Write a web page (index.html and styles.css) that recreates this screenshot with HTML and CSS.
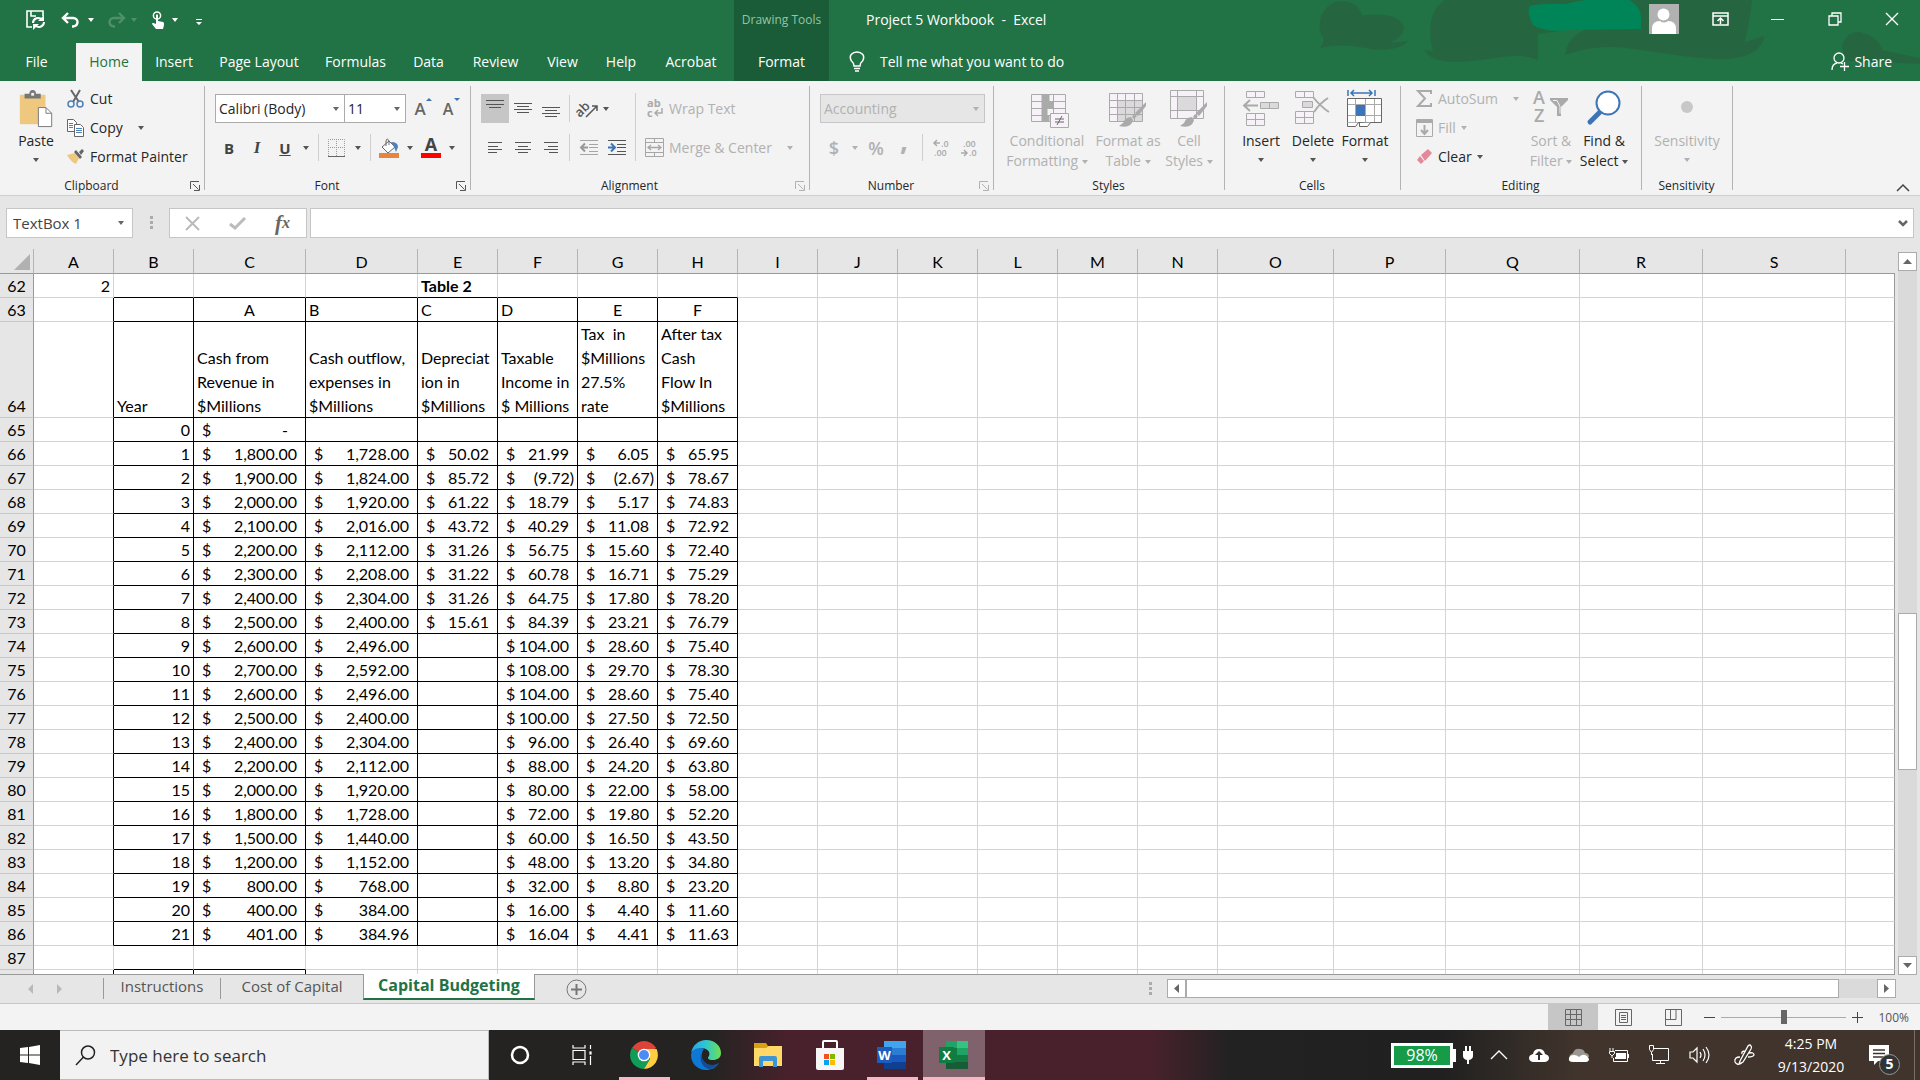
FILE: index.html
```html
<!DOCTYPE html>
<html lang="en">
<head>
    <meta charset="UTF-8">
    <title>Project 5 Workbook - Excel</title>
    <meta name="viewport" content="width=device-width, initial-scale=1.0">
    <link rel="stylesheet" href="styles.css">
</head>
<body>
    <header class="top">
        <svg class="clouds" width="640" height="81" viewBox="0 0 640 81" fill="#256641" aria-hidden="true">
            <path d="M40 48Q46 40 41 34C36 20 45 1 62 1Q78 2 82 15C105 13 122 16 124 28Q124 36 110 43L128 41Q122 50 95 50Q60 42 40 48Z"/>
            <path d="M165 0C148 10 148 35 153 51L145 50Q150 62 175 62C200 62 215 56 240 56Q250 57 258 60L258 34L300 28L300 0Z"/>
            <path d="M285 55Q288 36 305 30L300 0L472 0Q470 20 465 42L484 36Q482 55 450 59C410 60 370 50 335 47Q310 46 285 55Z"/>
            <path d="M562 45Q566 32 580 32Q598 36 602 50L640 58L640 64L600 62Q575 62 565 60Z"/>
            <path fill="#008558" d="M250 6Q262 3 285 4Q310 -2 330 -2L346 -2Q361 6 361 17V29L290 30Q265 33 253 25Q246 12 250 6Z"/>
        </svg>
        <div class="title-row">
            <div class="quick">
                <button class="q-save" aria-label="Save"><svg width="20" height="20" viewBox="0 0 20 20" fill="none" stroke="#fff" stroke-width="1.6"><path d="M6 17H1V1h16v5M5 1v5h5"/><path d="M7 13a5 5 0 0 1 9-3M18 12a5 5 0 0 1-9 3" stroke-width="2"/><path d="M18 5v6h-6zM7 20v-6h6z" fill="#fff" stroke="none"/></svg></button>
                <button class="q-undo" aria-label="Undo"><svg width="19" height="16" viewBox="0 0 19 16" fill="none" stroke="#fff" stroke-width="2.4"><path d="M2 6h10c6 0 6 8 0 8.500h-1M7 1L2 6l5 5"/></svg></button>
                <i class="caret white"></i>
                <button class="q-redo" aria-label="Redo"><svg width="19" height="16" viewBox="0 0 19 16" fill="none" stroke="#4f9069" stroke-width="2.400"><path d="M17 6H7C1 6 1 14 7 14.500h1M12 1l5 5-5 5"/></svg></button>
                <i class="caret faded"></i>
                <button class="q-touch" aria-label="Touch mode"><svg width="15" height="19" viewBox="0 0 15 19"><circle cx="6" cy="4.500" r="3.600" fill="none" stroke="#fff" stroke-width="1.500"/><path fill="#fff" d="M5 4q1-1.500 2 0v6l5 1q1.500.5 1 3l-1 4H5l-4-5q0-1.500 1.500-1L5 13z"/></svg></button>
                <i class="caret white"></i>
                <button class="q-more" aria-label="Customize"><svg width="6" height="6" viewBox="0 0 6 6"><path fill="#fff" d="M0 0h6v1H0zM0 3h6L3 6z"/></svg></button>
            </div>
            <div class="context">Drawing Tools</div>
            <div class="doc-title">Project 5 Workbook&nbsp; -&nbsp; Excel</div>
            <div class="window-buttons">
                <svg class="avatar" width="30" height="30" viewBox="0 0 30 30"><path fill="#b1b1b1" d="M0 0h30v30H0z"/><circle cx="14.500" cy="10.500" r="6" fill="#fff"/><path fill="#fff" d="M3 30V25q0-8 8-8 4 3 8 0 8 0 8 8v5z"/></svg>
                <button aria-label="Ribbon options"><svg width="17" height="14" viewBox="0 0 17 14" fill="none" stroke="#fff" stroke-width="1.500"><path d="M1 1h15v12H1zM1 4h15M8.500 12V6M5.500 9l3-3 3 3"/></svg></button>
                <button aria-label="Minimize"><svg width="13" height="14" viewBox="0 0 13 14"><path stroke="#fff" d="M0 7.500h13"/></svg></button>
                <button aria-label="Restore"><svg width="14" height="14" viewBox="0 0 14 14" fill="none" stroke="#fff" stroke-width="1.300"><path d="M1 4h9v9H1zM4 4V1h9v9h-3"/></svg></button>
                <button aria-label="Close"><svg width="14" height="14" viewBox="0 0 14 14"><path stroke="#fff" stroke-width="1.400" d="M1 1l12 12M13 1L1 13"/></svg></button>
            </div>
        </div>
        <nav class="tabs">
            <div class="tab-list">
                <button class="t-file">File</button>
                <button class="t-home active">Home</button>
                <button class="t-insert">Insert</button>
                <button class="t-page">Page Layout</button>
                <button class="t-formulas">Formulas</button>
                <button class="t-data">Data</button>
                <button class="t-review">Review</button>
                <button class="t-view">View</button>
                <button class="t-help">Help</button>
                <button class="t-acrobat">Acrobat</button>
            </div>
            <button class="context">Format</button>
            <button class="tell"><svg width="16" height="21" viewBox="0 0 16 21" fill="none" stroke="#fff" stroke-width="1.500"><path d="M5 15q0-3-2.500-5C-1 4 4 1 8 1s9 3 5.500 9Q11 12 11 15zM5 17.500h6M6 20h4"/></svg>Tell me what you want to do</button>
            <button class="share"><svg width="19" height="19" viewBox="0 0 19 19" fill="none" stroke="#fff" stroke-width="1.300"><circle cx="8" cy="6" r="5"/><path d="M1 18q0-6 5-7M10 11l2 1M13.500 10v9M9 14.500h9"/></svg>Share</button>
        </nav>
    </header>

    <section class="ribbon">
        <div class="group clipboard">
            <div class="tools">
                <button class="big paste">
                    <svg width="36" height="40" viewBox="0 0 36 40"><path fill="#edc87e" d="M1 5h27v31H1z"/><path fill="#777" d="M6 4h5q0-4 3.500-4T18 4h5v5H6z"/><path fill="#f3f3f3" d="M13 3h3v3h-3z"/><path fill="#fff" stroke="#777" d="M20.500 18.500h8l6 6v14h-14z"/><path fill="none" stroke="#777" d="M28.500 18.500v6h6"/></svg>
                    <span>Paste</span><i class="caret"></i>
                </button>
                <div class="stack">
                    <button><svg width="18" height="18" viewBox="0 0 18 18" fill="none"><path stroke="#666" stroke-width="2" d="M4 0l8 12M13 0L6 12"/><circle cx="4" cy="14" r="3" stroke="#4f80b8" stroke-width="1.500"/><circle cx="13" cy="14" r="3" stroke="#4f80b8" stroke-width="1.500"/></svg>Cut</button>
                    <button><svg width="18" height="18" viewBox="0 0 18 18" fill="#fff" stroke="#666"><path d="M.5.5h6l3 3v9h-9z"/><path d="M7.500 5.500h6l3 3v9h-9z"/><path stroke="#4f80b8" d="M2 4.500h4M2 6.500h4M2 8.500h4M9 9.500h6M9 11.500h6M9 13.500h6"/></svg>Copy<i class="caret far"></i></button>
                    <button><svg width="18" height="16" viewBox="0 0 18 16"><path fill="#edc87e" d="M0 6l8-2 4 5-3 6q-5-2-9-9z"/><path fill="#666" d="M7 3l2-2 6 7-2 2zM12 3l3-3 2 2-3 4z"/></svg>Format Painter</button>
                </div>
            </div>
            <div class="caption">Clipboard<svg class="launch"><use href="#launch"/></svg></div>
        </div>

        <div class="group font">
            <div class="tools rows">
                <div class="row">
                    <span class="drop font-name"><select aria-label="Font"><option>Calibri (Body)</option></select></span>
                    <span class="drop font-size"><select aria-label="Font size"><option>11</option></select></span>
                    <button class="w28 grow" aria-label="Increase font size"><b>A</b><i class="up"></i></button>
                    <button class="w28 shrink" aria-label="Decrease font size"><b>A</b><i class="down"></i></button>
                </div>
                <div class="row">
                    <button class="w28 bold">B</button>
                    <button class="w28 italic">I</button>
                    <button class="w28 under">U</button>
                    <i class="caret"></i>
                    <i class="sep"></i>
                    <button class="w28 edges" aria-label="Borders"><svg width="18" height="18" viewBox="0 0 18 18"><path fill="none" stroke="#a594a8" stroke-dasharray="1 1" d="M.5 17V.5h16V17M8.500 0v17M0 8.500h17"/><path stroke="#666" d="M0 17.500h17"/></svg></button>
                    <i class="caret"></i>
                    <i class="sep"></i>
                    <button class="w28 fill" aria-label="Fill color"><svg width="20" height="20" viewBox="0 0 20 20"><path fill="#fff" stroke="#666" d="M3 9l7-6 6 6-7 6z"/><path fill="none" stroke="#666" d="M7 8V3q1-4 3 0v4"/><path fill="#4f80b8" d="M12 4q7 0 7 5l-2 5-2-5z"/><path fill="#e8853d" d="M0 15h20v5H0z"/></svg></button>
                    <i class="caret"></i>
                    <button class="w28 color" aria-label="Font color">A</button>
                    <i class="caret"></i>
                </div>
            </div>
            <div class="caption">Font<svg class="launch"><use href="#launch"/></svg></div>
        </div>

        <div class="group align">
            <div class="tools">
                <div class="rows">
                    <div class="row">
                        <button class="w28 pressed" aria-label="Top align"><svg width="18" height="18"><path stroke="#555" d="M0 4.500h18M3 7.500h12M0 .5h18"/></svg></button>
                        <button class="w28" aria-label="Middle align"><svg width="18" height="18"><path stroke="#555" d="M0 3.500h18M3 6.500h12M0 9.500h18M3 12.500h12"/></svg></button>
                        <button class="w28" aria-label="Bottom align"><svg width="18" height="18"><path stroke="#555" d="M0 7.500h18M3 10.500h12M0 13.500h18M3 16.500h12"/></svg></button>
                        <i class="sep"></i>
                        <button class="w28 angle" aria-label="Orientation"><svg width="20" height="19" viewBox="0 0 20 19"><text x="-5" y="13" transform="rotate(-45 5 9)">ab</text><path fill="none" stroke="#555" stroke-width="1.500" d="M7 18L18 7M13 7h5v5"/></svg></button>
                        <i class="caret"></i>
                    </div>
                    <div class="row">
                        <button class="w28" aria-label="Align left"><svg width="14" height="12"><path stroke="#555" d="M0 .5h14M0 4.500h10M0 7.500h14M0 10.500h9"/></svg></button>
                        <button class="w28" aria-label="Center"><svg width="16" height="12"><path stroke="#555" d="M0 .5h16M3 4.500h10M0 7.500h16M3 10.500h10"/></svg></button>
                        <button class="w28" aria-label="Align right"><svg width="14" height="12"><path stroke="#555" d="M0 .5h14M4 4.500h10M0 7.500h14M5 10.500h9"/></svg></button>
                        <i class="sep"></i>
                        <button class="w28" aria-label="Decrease indent"><svg width="18" height="17"><path stroke="#a6a6a6" d="M0 1.500h18M9 5.500h9M9 8.500h9M9 12.500h9M0 15.500h18"/><path fill="none" stroke="#999" stroke-width="2" d="M8 8.500H1M5 4.500l-4 4 4 4"/></svg></button>
                        <button class="w28" aria-label="Increase indent"><svg width="18" height="17"><path stroke="#555" d="M0 1.500h18M9 5.500h9M9 8.500h9M9 12.500h9M0 15.500h18"/><path fill="none" stroke="#3d74b5" stroke-width="2" d="M0 8.500h7M3 4.500l4 4-4 4"/></svg></button>
                    </div>
                </div>
                <i class="sep tall"></i>
                <div class="rows">
                    <div class="row"><button class="wide" disabled><svg class="wrap-icon" width="19" height="19" viewBox="0 0 19 19"><text x="2" y="8">ab</text><text x="2" y="18">c</text><path fill="none" stroke="#aaa" stroke-width="1.500" d="M17 9v5h-7M13 11l-3 3 3 3"/></svg>Wrap Text</button></div>
                    <div class="row"><button class="wide" disabled><svg width="19" height="19" viewBox="0 0 19 19" fill="none" stroke="#a6a6a6"><path d="M.5.5h18v18H.5zM.5 4.500h18M.5 14.500h18M9.500.5v4M9.500 14.500v4"/><path stroke-width="1.300" d="M3 9.500h13M6 7L3 9.500 6 12M13 7l3 2.500-3 2.500"/></svg>Merge &amp; Center<i class="caret faint far"></i></button></div>
                </div>
            </div>
            <div class="caption">Alignment<svg class="launch off"><use href="#launch"/></svg></div>
        </div>

        <div class="group number">
            <div class="tools rows">
                <div class="row"><span class="drop format off"><select aria-label="Number format" disabled><option>Accounting</option></select></span></div>
                <div class="row">
                    <button class="w28 sign" disabled>$</button>
                    <i class="caret faint"></i>
                    <button class="w28 sign" disabled>%</button>
                    <button class="w28 comma" disabled>,</button>
                    <i class="sep"></i>
                    <button class="w28 dec" disabled aria-label="Increase decimal"><svg width="16" height="18" viewBox="0 0 16 18"><text x="8" y="8">.0</text><text x="1" y="17">.00</text><path fill="none" stroke="#aaa" stroke-width="1.500" d="M7 4H1M4 1L1 4l3 3"/></svg></button>
                    <button class="w28 dec" disabled aria-label="Decrease decimal"><svg width="16" height="18" viewBox="0 0 16 18"><text x="2" y="8">.00</text><text x="8" y="17">.0</text><path fill="none" stroke="#aaa" stroke-width="1.500" d="M0 14h6M3 11l3 3-3 3"/></svg></button>
                </div>
            </div>
            <div class="caption">Number<svg class="launch off"><use href="#launch"/></svg></div>
        </div>

        <div class="group styles">
            <div class="tools">
                <button class="big cond" disabled>
                    <svg width="38" height="38" viewBox="0 0 38 38" fill="#f6f2f7" stroke="#aaa"><path d="M.5 4.500h34v27H.5zM.5 11.500h34M.5 18.500h34M.5 25.500h34M11.500 4.500v27M22.500 4.500v27"/><path fill="#aaa" d="M11 5h7v6h-7zM11 12h11v6H11zM11 19h5v6h-5zM11 26h7v5h-7z"/><path d="M19.500 23.500h18v14h-18z"/><path stroke="#666" d="M24 29h9M24 32h9M31 26l-5 9"/></svg>
                    <span>Conditional</span><span>Formatting <i class="caret faint"></i></span>
                </button>
                <button class="big fmt-table" disabled>
                    <svg width="38" height="38" viewBox="0 0 38 38" fill="#f6f2f7" stroke="#aaa"><path d="M.5 3.500h33v28H.5z"/><path fill="#dcd9dc" stroke="none" d="M9 11h24v20H9z"/><path fill="none" d="M.5 10.500h33M.5 17.500h33M.5 24.500h33M8.500 3.500v28M16.500 3.500v28M25.500 3.500v28"/><use href="#brush"/></svg>
                    <span>Format as</span><span>Table <i class="caret faint"></i></span>
                </button>
                <button class="big cell-styles" disabled>
                    <svg width="38" height="38" viewBox="0 0 38 38" fill="#f6f2f7" stroke="#aaa"><path d="M.5.5h33v28H.5z"/><path fill="#dcd9dc" d="M7.500 6.500h19v14h-19z"/><path fill="none" d="M.5 6.500h33M.5 20.500h33M7.500.5v28M26.500.5v28"/><use href="#brush"/></svg>
                    <span>Cell</span><span>Styles <i class="caret faint"></i></span>
                </button>
            </div>
            <div class="caption">Styles</div>
        </div>

        <div class="group cells">
            <div class="tools">
                <button class="big">
                    <svg width="36" height="38" viewBox="0 0 36 38" fill="#f6f2f7" stroke="#aaa"><path d="M3.500 1.500h18v6h-18zM12.500 1.500v6M3.500 23.500h18v12h-18zM3.500 29.500h18M12.500 23.500v12"/><path fill="#dcd9dc" d="M17.500 12.500h18v6h-18zM26.500 12.500v6"/><path fill="none" stroke-width="2" d="M15 15.500H2M7 10l-6 5.500L7 21"/></svg>
                    <span>Insert</span><i class="caret"></i>
                </button>
                <button class="big">
                    <svg width="36" height="38" viewBox="0 0 36 38" fill="#f6f2f7" stroke="#aaa"><path d="M.5 1.500h18v6H.5zM9.500 1.500v6M.5 21.500h18v12H.5zM.5 27.500h18M9.500 21.500v12"/><path fill="#dcd9dc" d="M7.500 11.500h10v6h-10z"/><path fill="none" stroke-width="2" d="M18 7q8 10 16 15M33 8q-8 5-14 14"/></svg>
                    <span>Delete</span><i class="caret"></i>
                </button>
                <button class="big">
                    <svg width="36" height="38" viewBox="0 0 36 38" fill="#fff" stroke="#666"><path fill="none" stroke="#3d74b5" stroke-width="1.500" d="M1 0v6M28 0v6M4 3h21M7 0L4 3l3 3M22 0l3 3-3 3"/><path d="M.5 8.500h34v24H.5z"/><path fill="none" stroke="#aaa" d="M1 14.500h33M1 25.500h33M8.500 9v23M18.500 9v23M27.500 9v23"/><path fill="#3d74b5" stroke="none" d="M9 15h9v11H9z"/><path d="M.5 32.500v4h8l3-4M12.500 33v3.500h8l3-4"/></svg>
                    <span>Format</span><i class="caret"></i>
                </button>
            </div>
            <div class="caption">Cells</div>
        </div>

        <div class="group editing">
            <div class="tools">
                <div class="stack">
                    <button disabled><svg width="17" height="18" viewBox="0 0 17 18"><path fill="none" stroke="#aaa" stroke-width="2" d="M15 4V1H2l7 7.500L2 16h13v-3"/></svg>AutoSum<i class="caret faint far"></i></button>
                    <button disabled><svg width="17" height="18" viewBox="0 0 17 18"><path fill="none" stroke="#aaa" d="M.5.5h16v17H.5z"/><path fill="#aaa" d="M1 1h15v3H1z"/><path fill="none" stroke="#aaa" stroke-width="2" d="M8.500 6v9M5 11l3.500 4 3.500-4"/></svg>Fill<i class="caret faint"></i></button>
                    <button><svg width="17" height="18" viewBox="0 0 17 18"><path fill="#e4899b" d="M5 7l7-6 4 4-7 8zM4 8l4 5-3 3-4-4z"/></svg>Clear<i class="caret"></i></button>
                </div>
                <button class="big sort" disabled>
                    <svg width="36" height="38" viewBox="0 0 36 38"><text x="0" y="14">A</text><text x="1" y="32">Z</text><path fill="#aaa" d="M17 8h18v2l-7 7v9h-4v-9l-7-7z"/><path stroke="#f3f3f3" d="M20 10.500h4l3 6v7"  fill="none"/></svg>
                    <span>Sort &amp;</span><span>Filter <i class="caret faint"></i></span>
                </button>
                <button class="big find">
                    <svg width="36" height="38" viewBox="0 0 36 38"><path stroke="#3d74b5" stroke-width="5" stroke-linecap="round" d="M4 32l10-10"/><circle cx="22" cy="13" r="11.500" fill="#fff" stroke="#3d74b5" stroke-width="2"/></svg>
                    <span>Find &amp;</span><span>Select <i class="caret"></i></span>
                </button>
            </div>
            <div class="caption">Editing</div>
        </div>

        <div class="group sens">
            <div class="tools">
                <button class="big" disabled>
                    <svg width="36" height="38" viewBox="0 0 36 38"><circle cx="18" cy="17" r="6" fill="#c8c8c8"/></svg>
                    <span>Sensitivity</span><i class="caret faint"></i>
                </button>
            </div>
            <div class="caption">Sensitivity</div>
        </div>
        <button class="collapse" aria-label="Collapse ribbon"><svg width="14" height="8" viewBox="0 0 14 8"><path fill="none" stroke="#444" stroke-width="1.500" d="M1 7l6-6 6 6"/></svg></button>
    </section>

    <section class="formula-bar">
        <span class="drop name-box"><select aria-label="Name box"><option>TextBox 1</option></select></span>
        <i class="dots"></i>
        <div class="fx">
            <button aria-label="Cancel"><svg width="15" height="13" viewBox="0 0 15 13"><path stroke="#bbb" stroke-width="2" d="M1 0l13 13M14 0L1 13"/></svg></button>
            <button aria-label="Enter"><svg width="17" height="13" viewBox="0 0 17 13"><path fill="none" stroke="#bbb" stroke-width="3" d="M1 7l5 4L16 1"/></svg></button>
            <button class="fx-button" aria-label="Insert function"><i>f</i>x</button>
        </div>
        <div class="formula"><input type="text" aria-label="Formula"><svg width="10" height="7" viewBox="0 0 10 7"><path fill="none" stroke="#666" stroke-width="2.500" d="M1 1l4 4 4-4"/></svg></div>
    </section>

    <main class="workspace">
        <div class="sheet">
            <table>
                <colgroup id="cols"></colgroup>
                <thead><tr id="letters"><th class="corner"><svg width="16" height="16" viewBox="0 0 16 16"><path fill="#b1b1b1" d="M16 0v16H0z"/></svg></th></tr></thead>
                <tbody id="cells"></tbody>
            </table>
        </div>
        <div class="vscroll">
            <button aria-label="Scroll up"><svg width="9" height="5"><path fill="#666" d="M0 5h9L4.500 0z"/></svg></button>
            <div class="track"><div class="thumb"></div></div>
            <button aria-label="Scroll down"><svg width="9" height="5"><path fill="#666" d="M0 0h9L4.500 5z"/></svg></button>
        </div>
    </main>

    <section class="sheet-bar">
        <div class="sheet-nav">
            <svg width="5" height="10"><path fill="#b9b9b9" d="M5 0v10L0 5z"/></svg>
            <svg width="5" height="10"><path fill="#b9b9b9" d="M0 0v10l5-5z"/></svg>
        </div>
        <button class="sheet-tab s-instructions">Instructions</button>
        <button class="sheet-tab s-cost">Cost of Capital</button>
        <button class="sheet-tab s-budget active">Capital Budgeting</button>
        <button class="add-sheet" aria-label="New sheet"><svg width="21" height="21" viewBox="0 0 21 21" fill="none" stroke="#777"><circle cx="10.500" cy="10.500" r="9.500"/><path stroke-width="2" d="M5 10.500h11M10.500 5v11"/></svg></button>
        <i class="dots"></i>
        <div class="hscroll">
            <button aria-label="Scroll left"><svg width="5" height="9"><path fill="#666" d="M5 0v9L0 4.500z"/></svg></button>
            <div class="track"><div class="thumb"></div></div>
            <button aria-label="Scroll right"><svg width="5" height="9"><path fill="#666" d="M0 0v9l5-4.500z"/></svg></button>
        </div>
    </section>

    <footer class="status">
        <button class="view on" aria-label="Normal"><svg width="17" height="17" viewBox="0 0 17 17" fill="none" stroke="#666"><path d="M.5.5h16v16H.5zM.5 5.500h16M.5 10.500h16M5.500.5v16M11.500.5v16"/></svg></button>
        <button class="view" aria-label="Page layout"><svg width="17" height="17" viewBox="0 0 17 17" fill="none" stroke="#666"><path d="M.5.5h16v16H.5zM4.500 3.500h8v10h-8zM6 6.500h5M6 8.500h5M6 10.500h5"/></svg></button>
        <button class="view" aria-label="Page break preview"><svg width="17" height="17" viewBox="0 0 17 17" fill="none" stroke="#666"><path d="M.5.5h16v16H.5zM5.500.5v10M.5 10.500h10.500V.5"/></svg></button>
        <button class="zoom" aria-label="Zoom out"><svg width="11" height="11"><path stroke="#444" d="M0 5.500h11"/></svg></button>
        <input class="zoom-range" type="range" min="0" max="100" value="50" aria-label="Zoom">
        <button class="zoom" aria-label="Zoom in"><svg width="11" height="11"><path stroke="#444" d="M0 5.500h11M5.500 0v11"/></svg></button>
        <span class="percent">100%</span>
    </footer>

    <div class="taskbar">
        <button class="start" aria-label="Start"><svg width="20" height="20" viewBox="0 0 20 20"><path fill="#fff" d="M0 3l8-1v7.500H0zM9 2l11-2v9.500H9zM0 10.500h8V18l-8-1zM9 10.500h11V20L9 18z"/></svg></button>
        <label class="search"><svg width="21" height="21" viewBox="0 0 21 21" fill="none" stroke="#222" stroke-width="1.500"><circle cx="13" cy="7.500" r="6.500"/><path d="M8.500 12L1 20"/></svg><input type="text" placeholder="Type here to search"></label>
        <button class="app" aria-label="Cortana"><svg width="20" height="20"><circle cx="10" cy="10" r="8" fill="none" stroke="#fff" stroke-width="2.500"/></svg></button>
        <button class="app" aria-label="Task view"><svg width="20" height="20" viewBox="0 0 20 20" fill="none" stroke="#fff" stroke-width="1.200"><path d="M1 0v3h12V0M1 20v-3h12v3M1 5.500h12v9H1zM18.500 0v4M18.500 11v9"/><path fill="#fff" d="M18 7h1v2h-1z"/></svg></button>
        <button class="app open" aria-label="Chrome"><svg width="28" height="28" viewBox="0 0 28 28"><path fill="#db4437" d="M14 14L2 7a14 14 0 0 1 24.200 0z"/><path fill="#0f9d58" d="M14 14L1.900 7A14 14 0 0 0 14 28l6-10z"/><path fill="#ffcd40" d="M14 8h12.600A14 14 0 0 1 14 28l6-10z"/><circle cx="14" cy="14" r="6.300" fill="#fff"/><circle cx="14" cy="14" r="5" fill="#4c8bf5"/></svg></button>
        <button class="app" aria-label="Edge"><svg width="30" height="30" viewBox="0 0 30 30"><defs><linearGradient id="edge"><stop offset="0" stop-color="#2aa5e8"/><stop offset=".5" stop-color="#30c7cf"/><stop offset="1" stop-color="#6fe04e"/></linearGradient></defs><path fill="#0f78d4" d="M0 15C1 8 8 6 13 9c-4 4-3 14 4 16 4 1 8 0 11-2-3 5-8 7-13 7C6 30 0 23 0 15z"/><path fill="#124d96" d="M10 14c-2 8 3 15 9 15 4-1 7-3 9-6-8 5-17 0-18-9z"/><path fill="url(#edge)" d="M0 14C1 5 8 0 15 0c9 0 15 6 15 13 0 5-4 7-8 7-5 0-6-2-4-4 2-5-3-8-8-8C5 8 1 10 0 14z"/></svg></button>
        <button class="app" aria-label="File Explorer"><svg width="28" height="24" viewBox="0 0 28 24"><path fill="#d9a016" d="M0 0h12l2 3h14v6H0z"/><path fill="#ffd868" d="M0 5h12l3-2h13v20H0z"/><path fill="#3d96d3" d="M5 24v-9q0-2 2-2h14q2 0 2 2v9h-4v-6H9v6z"/></svg></button>
        <button class="app" aria-label="Microsoft Store"><svg width="30" height="30" viewBox="0 0 30 30"><path fill="none" stroke="#fff" stroke-width="2" d="M8 9V2q0-1 1-1h12q1 0 1 1v7"/><path fill="#f6f6f6" d="M1 8h28v20q0 2-2 2H3q-2 0-2-2z"/><path fill="#f25022" d="M9 14h5v5H9z"/><path fill="#7fba00" d="M15 14h5v5h-5z"/><path fill="#00a4ef" d="M9 20h5v5H9z"/><path fill="#ffb900" d="M15 20h5v5h-5z"/></svg></button>
        <button class="app open" aria-label="Word"><svg width="30" height="28" viewBox="0 0 30 28"><path fill="#41a5ee" d="M7 0h22v7H7z"/><path fill="#2b7cd3" d="M7 7h22v7H7z"/><path fill="#185abd" d="M7 14h22v7H7z"/><path fill="#103f91" d="M7 21h22v7H7z"/><path fill="#1b5cbe" d="M0 6h15v16H0z"/><text x="7.500" y="19">W</text></svg></button>
        <button class="app open current" aria-label="Excel"><svg width="30" height="28" viewBox="0 0 30 28"><path fill="#21a366" d="M7 0h22v7H7z"/><path fill="#33c481" d="M18 0h11v7H18z"/><path fill="#107c41" d="M7 7h22v14H7z"/><path fill="#21a366" d="M18 7h11v7H18z"/><path fill="#185c37" d="M7 21h22v7H7z"/><path fill="#107c41" d="M0 6h15v16H0z"/><text x="7.500" y="19">X</text></svg></button>
        <div class="tray">
            <div class="battery">98%</div>
            <svg class="plug" width="10" height="18" viewBox="0 0 10 18"><path fill="#fff" d="M2 0h2v5h2V0h2v5h2v5q0 3-4 4v4H4v-4q-4-1-4-4V5h2z"/></svg>
            <svg width="20" height="20" viewBox="0 0 20 20"><path fill="none" stroke="#fff" stroke-width="1.300" d="M2 14l8-8 8 8"/></svg>
            <svg width="20" height="20" viewBox="0 0 20 20"><path fill="#fff" d="M4 17q-4-1-4-4t4-4q1-5 6-5t6 5q4 1 4 4t-4 4z"/><path fill="#33302d" d="M9 15v-5H6l4-4 4 4h-3v5z"/></svg>
            <svg width="20" height="20" viewBox="0 0 20 20"><path fill="#9a9692" d="M1 14q-2-4 3-6 2-5 7-4 4 0 5 4 4 0 4 4z"/><path fill="#fff" d="M4 17q-5 0-4-4 1-3 5-3 3 0 5 2 3-3 6-2 4 2 4 5-1 2-3 2z"/></svg>
            <svg width="20" height="20" viewBox="0 0 20 20"><path fill="#fff" d="M7 8h10v6H6v-2h1z"/><path fill="none" stroke="#fff" d="M4.500 13v3.500h14v-11H6M19.500 9v4M1 3v3M4 3v3M.5 6.500h5v2l-2 2h-1l-2-2zM3 10v3"/></svg>
            <svg width="20" height="20" viewBox="0 0 20 20" fill="none" stroke="#fff"><path d="M5 3.500h14.500v12H3.500V9M11.500 16v3M7 18.500h9M.5.500h4v4l-2 3-2-3zM2.500 7v3"/></svg>
            <svg width="21" height="20" viewBox="0 0 21 20" fill="none" stroke="#fff" stroke-width="1.200"><path d="M1 7h3l4-4v14l-4-4H1zM11 7q2 3 0 6M14 4q4 6 0 12M17 2q6 8 0 16"/></svg>
            <svg class="pen" width="21" height="22" viewBox="0 0 21 22" fill="none" stroke="#fff" stroke-width="1.300"><path d="M6 17L14 2q2-2 3 0 1 1 0 3L9 18l-4 2zM6 13q-6 0-5 5 2 4 7 1M11 7q-4 0-3 3M15 9q5-1 5 2-1 2-6 2"/></svg>
            <div class="clock"><span>4:25 PM</span><span>9/13/2020</span></div>
            <div class="notice"><svg width="20" height="20" viewBox="0 0 20 20"><path fill="#fff" d="M0 0h20v16H9l-4 4v-4H0z"/><path stroke="#3c332c" stroke-width="1.400" d="M4 5h12M4 8.500h12M4 12h12"/></svg><b>5</b></div>
        </div>
    </div>

    <svg class="defs" width="0" height="0" aria-hidden="true">
        <symbol id="launch" viewBox="0 0 10 10"><path fill="none" stroke="currentColor" d="M.5 8V.5H9M3 3l5.500 5.500M9.500 4v5.500H4"/></symbol>
        <g id="brush" stroke="none"><path fill="#aaa" d="M37 12L26 23l3 3 8-10zM25 24l-2 3 2 2 3-3zM22 27q-6 0-8 6l-4 3q12 3 14-6z"/></g>
    </svg>

    <script>
        const widths = [34, 80, 80, 112, 112, 80, 80, 80, 80, 80, 80, 80, 80, 80, 80, 116, 112, 134, 123, 143, 0];
        const letters = 'ABCDEFGHIJKLMNOPQRS'.split('');

        const heads = [
            'Year', 'Cash from<br>Revenue in<br>$Millions', 'Cash outflow,<br>expenses in<br>$Millions',
            'Depreciat<br>ion in<br>$Millions', 'Taxable<br>Income in<br>$ Millions',
            'Tax&nbsp; in<br>$Millions<br>27.5%<br>rate', 'After tax<br>Cash<br>Flow In<br>$Millions'
        ];

        // year, revenue, outflow, depreciation, taxable income, tax, cash flow
        const data = [
            ['0', '-', '', '', '', '', ''],
            ['1', '1,800.00', '1,728.00', '50.02', '21.99', '6.05', '65.95'],
            ['2', '1,900.00', '1,824.00', '85.72', '(9.72)', '(2.67)', '78.67'],
            ['3', '2,000.00', '1,920.00', '61.22', '18.79', '5.17', '74.83'],
            ['4', '2,100.00', '2,016.00', '43.72', '40.29', '11.08', '72.92'],
            ['5', '2,200.00', '2,112.00', '31.26', '56.75', '15.60', '72.40'],
            ['6', '2,300.00', '2,208.00', '31.22', '60.78', '16.71', '75.29'],
            ['7', '2,400.00', '2,304.00', '31.26', '64.75', '17.80', '78.20'],
            ['8', '2,500.00', '2,400.00', '15.61', '84.39', '23.21', '76.79'],
            ['9', '2,600.00', '2,496.00', '', '104.00', '28.60', '75.40'],
            ['10', '2,700.00', '2,592.00', '', '108.00', '29.70', '78.30'],
            ['11', '2,600.00', '2,496.00', '', '104.00', '28.60', '75.40'],
            ['12', '2,500.00', '2,400.00', '', '100.00', '27.50', '72.50'],
            ['13', '2,400.00', '2,304.00', '', '96.00', '26.40', '69.60'],
            ['14', '2,200.00', '2,112.00', '', '88.00', '24.20', '63.80'],
            ['15', '2,000.00', '1,920.00', '', '80.00', '22.00', '58.00'],
            ['16', '1,800.00', '1,728.00', '', '72.00', '19.80', '52.20'],
            ['17', '1,500.00', '1,440.00', '', '60.00', '16.50', '43.50'],
            ['18', '1,200.00', '1,152.00', '', '48.00', '13.20', '34.80'],
            ['19', '800.00', '768.00', '', '32.00', '8.80', '23.20'],
            ['20', '400.00', '384.00', '', '16.00', '4.40', '11.60'],
            ['21', '401.00', '384.96', '', '16.04', '4.41', '11.63']
        ];

        document.getElementById('cols').innerHTML =
            widths.map(w => w ? `<col style="width:${w}px">` : '<col>').join('');
        document.getElementById('letters').innerHTML +=
            letters.map(l => `<th>${l}</th>`).join('') + '<th></th>';

        const body = document.getElementById('cells');

        function addRow(num, values, cls) {
            const row = document.createElement('tr');
            if (cls) row.className = cls;
            let html = `<th>${num}</th>`;
            for (let i = 0; i < 20; i++) {
                html += values[i] || '<td></td>';
            }
            row.innerHTML = html;
            body.appendChild(row);
        }

        function money(v) {
            if (!v) return '<td></td>';
            const cls = v[0] === '(' ? 'neg' : v === '-' ? 'zero' : '';
            return `<td><div class="money ${cls}"><span>$</span><span>${v}</span></div></td>`;
        }

        addRow(62, ['<td class="num">2</td>', '', '', '', '<td><b>Table 2</b></td>'], 'before');
        addRow(63, ['', '', '<td class="mid">A</td>', '<td>B</td>', '<td>C</td>', '<td>D</td>',
            '<td class="mid">E</td>', '<td class="mid">F</td>'], 'boxed');
        addRow(64, [''].concat(heads.map(h => `<td><div>${h}</div></td>`)), 'boxed heads');
        data.forEach((d, i) => {
            addRow(65 + i, ['', `<td class="num">${d[0]}</td>`].concat(d.slice(1).map(money)), 'boxed');
        });
        addRow(87, [], 'before-next');
        addRow('', [], 'next');
    </script>
</body>
</html>
```

FILE: styles.css
```css
* {
    box-sizing: border-box;
}
body {
    margin: 0;
    height: 100vh;
    display: flex;
    flex-direction: column;
    overflow: hidden;
    background: #e6e6e6;
    color: #262626;
    font-family: "Open Sans", "Noto Sans", sans-serif;
    font-size: 14px;
}
button, input, select {
    font: inherit;
    color: inherit;
    border: 0;
    margin: 0;
    padding: 0;
    background: none;
    outline: none;
}
button {
    display: flex;
    align-items: center;
    justify-content: center;
    white-space: nowrap;
    flex: none;
}
button:disabled {
    color: #b1b1b1;
}
svg {
    flex: none;
    overflow: visible;
}
.defs {
    position: absolute;
}

/* small triangles */
.caret {
    flex: none;
    width: 0;
    border: 3px solid transparent;
    border-top: 4px solid #555;
    border-bottom: 0;
}
.caret.white { border-top-color: #fff; }
.caret.faded { border-top-color: #4f9069; }
.caret.faint { border-top-color: #b1b1b1; }

/* title and tabs */
.top {
    position: relative;
    flex: none;
    background: #217346;
    color: #fff;
}
.clouds {
    position: absolute;
    top: 0;
    right: 0;
    overflow: hidden;
}
.title-row, .tabs {
    position: relative;
    display: flex;
}
.title-row {
    height: 43px;
}
.quick, .tab-list {
    width: 734px;
    flex: none;
    display: flex;
}
.quick {
    padding-left: 20px;
    height: 40px;
    align-items: center;
}
.q-save { width: 32px; }
.q-undo { width: 36px; }
.quick .caret { margin-right: 7px; }
.q-redo { width: 30px; }
.q-touch { width: 28px; }
.q-more { width: 28px; padding-top: 4px; }
.context {
    width: 95px;
    flex: none;
    background: #1b5c38;
}
div.context {
    font-size: 12px;
    line-height: 39px;
    text-align: center;
    color: #90c5a5;
}
.doc-title {
    padding-left: 37px;
    line-height: 39px;
}
.window-buttons {
    margin-left: auto;
    display: flex;
    height: 38px;
    align-items: center;
}
.window-buttons button {
    width: 57px;
}
.avatar {
    margin-right: 13px;
}
.tabs {
    height: 38px;
}
.tabs button {
    padding-bottom: 2px;
}
.tabs .active {
    background: #f3f3f3;
    color: #217346;
}
.t-file { width: 76px; padding-right: 3px; }
.t-home { width: 66px; }
.t-insert { width: 64px; }
.t-page { width: 106px; }
.t-formulas { width: 87px; }
.t-data { width: 59px; }
.t-review { width: 75px; }
.t-view { width: 59px; }
.t-help { width: 58px; }
.t-acrobat { width: 82px; }
.tell {
    padding-left: 20px;
    gap: 15px;
}
.share {
    margin-left: auto;
    margin-right: 28px;
    gap: 4px;
}

/* ribbon */
.ribbon {
    flex: none;
    display: flex;
    height: 115px;
    background: #f3f3f3;
    border-bottom: 1px solid #cfcfcf;
}
.group {
    flex: none;
    display: flex;
    flex-direction: column;
    background: linear-gradient(#b4b4b4, #b4b4b4) no-repeat right center / 1px 104px;
}
.clipboard { width: 205px; }
.font { width: 266px; }
.align { width: 339px; }
.number { width: 184px; }
.styles { width: 231px; }
.cells { width: 176px; }
.editing { width: 241px; }
.sens { width: 91px; }
.tools {
    height: 94px;
    display: flex;
}
.caption {
    position: relative;
    height: 20px;
    line-height: 21px;
    font-size: 12px;
    text-align: center;
    padding-right: 22px;
}
.styles .caption, .cells .caption, .editing .caption, .sens .caption {
    padding-right: 2px;
}
.launch {
    position: absolute;
    right: 5px;
    top: 6px;
    width: 10px;
    height: 10px;
    color: #555;
}
.launch.off { color: #b1b1b1; }
.big {
    flex-direction: column;
    justify-content: flex-start;
    padding-top: 9px;
    line-height: 20px;
}
.big svg {
    margin-bottom: 3px;
}
.big > .caret {
    margin-top: 7px;
}
.big span .caret {
    display: inline-block;
    vertical-align: middle;
}
.paste {
    width: 58px;
    margin-left: 7px;
}
.paste svg {
    height: 38px;
}
.stack {
    padding-top: 3px;
    display: flex;
    flex-direction: column;
    align-items: flex-start;
}
.stack button {
    height: 29px;
    padding-left: 2px;
    gap: 5px;
}
.caret.far {
    margin-left: 10px;
}
.rows {
    flex-direction: column;
    padding-top: 8px;
}
.row {
    display: flex;
    height: 39px;
    align-items: center;
}
.w28 {
    position: relative;
    width: 28px;
    height: 29px;
}
.sep {
    flex: none;
    width: 1px;
    height: 27px;
    background: #cfcfcf;
}
.drop {
    position: relative;
    height: 29px;
    background: #fff;
    border: 1px solid #ababab;
}
.drop select {
    appearance: none;
    width: 100%;
    height: 100%;
    padding-left: 3px;
    opacity: 1;
}
.drop::after {
    content: "";
    position: absolute;
    right: 5px;
    top: 12px;
    border: 3px solid transparent;
    border-top: 4px solid #666;
    border-bottom: 0;
}
.drop.off {
    background: #e6e6e6;
    border-color: #c6c6c6;
    color: #b1b1b1;
}
.drop.off::after {
    border-top-color: #b1b1b1;
}
.font .row {
    padding-left: 10px;
}
.font-name { width: 129px; border-right: 0; }
.font-size { width: 62px; }
.grow b, .shrink b {
    font-size: 17px;
    font-weight: 600;
    color: #666;
}
.shrink b { font-size: 16px; }
.up, .down {
    position: absolute;
    right: 2px;
    top: 4px;
    border: 3px solid transparent;
    border-bottom-color: #3d74b5;
    border-top: 0;
}
.down {
    border: 3px solid transparent;
    border-top-color: #3d74b5;
    border-bottom: 0;
}
.font .row .caret {
    margin: 0 9px 0 4px;
}
.bold, .italic, .under, .color {
    color: #444;
    font-weight: 700;
    font-size: 15px;
}
.italic {
    font-family: "Liberation Serif", serif;
    font-style: italic;
    font-size: 17px;
}
.under { text-decoration: underline; }
.edges {
    width: 32px;
    padding-left: 4px;
}
.fill {
    width: 32px;
    padding-left: 4px;
}
.font .row .fill + .caret {
    margin-right: 8px;
}
.color {
    width: 20px;
    height: 20px;
    padding-bottom: 3px;
    border-bottom: 5px solid #f00;
    font-size: 18px;
}
.font .row .color + .caret {
    margin-left: 8px;
}
.align .rows {
    display: flex;
}
.align .tools > .rows:first-child {
    width: 164px;
    padding-left: 10px;
}
.align .w28 + .sep {
    margin: 0 5px 0 4px;
}
.pressed {
    background: #c6c6c6;
}
.angle text {
    font-size: 13px;
    font-weight: 600;
    fill: #555;
}
.tall {
    height: 68px;
    margin-top: 12px;
}
.wide {
    gap: 5px;
    padding-left: 9px;
}
.wrap-icon text {
    font-size: 11px;
    font-weight: 700;
    fill: #aaa;
}
.number .row {
    padding-left: 10px;
}
.format { width: 165px; }
.sign {
    font-size: 18px;
    font-weight: 600;
}
.comma {
    font-size: 28px;
    font-weight: 700;
    padding-bottom: 18px;
}
.number .caret { margin: 0 4px; }
.number .sep { margin: 0 4px; }
.dec text {
    font-size: 9px;
    font-weight: 600;
    fill: #aaa;
}
.styles .tools { padding-left: 8px; }
.cond { width: 90px; }
.cond svg { margin-left: 5px; }
.fmt-table { width: 72px; }
.cell-styles { width: 50px; }
.cells .tools { padding-left: 10px; }
.cells .big { width: 52px; }
.editing .tools { padding-left: 13px; }
.editing .stack { width: 110px; }
.sort { width: 54px; }
.find { width: 52px; }
.sort text {
    font-size: 18px;
    font-weight: 600;
    fill: #aaa;
}
.sens .big { width: 90px; }
.collapse {
    margin: auto 10px 3px auto;
}

/* formula bar */
.formula-bar {
    flex: none;
    display: flex;
    height: 53px;
    padding: 12px 6px 11px;
}
.formula-bar .drop, .fx, .formula {
    height: 30px;
    background: #fff;
    border: 1px solid #c6c6c6;
}
.name-box {
    width: 127px;
    color: #444;
    font-size: 15px;
}
.name-box select { padding-left: 6px; }
.name-box::after { right: 8px; }
.dots {
    flex: none;
    width: 3px;
    height: 13px;
    background: repeating-linear-gradient(#ababab 0 3px, transparent 3px 5px);
}
.formula-bar .dots {
    margin: 8px 16px 0 17px;
}
.fx {
    display: flex;
    width: 138px;
    margin-right: 3px;
    flex: none;
}
.fx button { width: 45px; }
.fx-button {
    font: italic 700 16px "Liberation Serif", serif;
    color: #666;
}
.fx-button i { font-size: 21px; }
.formula {
    flex: 1;
    display: flex;
    align-items: center;
    padding-right: 5px;
}
.formula input { flex: 1; }

/* grid */
.workspace {
    flex: 1;
    min-height: 0;
    display: flex;
}
.sheet {
    flex: 1;
    overflow: hidden;
    border-bottom: 1px solid #999;
}
.sheet table {
    width: 100%;
    table-layout: fixed;
    border-collapse: separate;
    border-spacing: 0;
    font-family: Lato, "Liberation Sans", sans-serif;
    font-size: 16px;
    line-height: 23px;
    color: #000;
}
.sheet th {
    padding: 0;
    font-weight: 400;
    background: #e6e6e6;
    border-right: 1px solid #b4b4b4;
    border-bottom: 1px solid #c6c6c6;
    vertical-align: bottom;
}
.sheet thead th {
    height: 25px;
    border-bottom-color: #999;
}
.sheet thead th:last-child { border-right: 0; }
.sheet tbody th { border-right-color: #999; }
.sheet .corner {
    text-align: right;
    padding: 0 3px 3px 0;
    line-height: 0;
}
.sheet td {
    height: 24px;
    padding: 0 3px;
    background: #fff;
    border-right: 1px solid #d4d4d4;
    border-bottom: 1px solid #d4d4d4;
    white-space: nowrap;
    vertical-align: bottom;
}
.sheet td:last-child { border-right-color: #999; }
.num { text-align: right; }
.mid { text-align: center; }
.heads div {
    margin-bottom: -1px;
    line-height: 24px;
}
.sheet .heads td { height: 96px; }
.money {
    display: flex;
    justify-content: space-between;
    padding: 0 5px;
}
.money.neg { padding-right: 0; }
.money.zero { padding-right: 14px; }

.before td:nth-child(n+3):nth-child(-n+9),
.boxed td:nth-child(n+3):nth-child(-n+9),
.before-next td:nth-child(3),
.before-next td:nth-child(4) {
    border-bottom-color: #000;
}
.boxed td:nth-child(n+2):nth-child(-n+9),
.next td:nth-child(n+2):nth-child(-n+4) {
    border-right-color: #000;
}

/* scroll bars */
.vscroll {
    width: 25px;
    padding: 3px 3px 0;
    display: flex;
    flex-direction: column;
}
.vscroll button, .hscroll button {
    width: 19px;
    height: 19px;
    background: #fff;
    border: 1px solid #ababab;
}
.track {
    flex: 1;
    background: #dadada;
}
.thumb {
    background: #fff;
    border: 1px solid #ababab;
}
.vscroll .track { padding-top: 342px; }
.vscroll .thumb { height: 157px; }

/* sheet tabs */
.sheet-bar {
    flex: none;
    display: flex;
    height: 29px;
    border-bottom: 1px solid #c6c6c6;
}
.sheet-nav {
    width: 103px;
    padding: 9px 0 0 28px;
    display: flex;
    gap: 24px;
}
.sheet-tab {
    height: 21px;
    margin-top: 3px;
    padding-bottom: 6px;
    border-left: 1px solid #999;
    color: #555;
    font-size: 15px;
}
.s-instructions { width: 117px; }
.s-cost { width: 143px; }
.sheet-tab.active {
    position: relative;
    width: 172px;
    height: 26px;
    margin-top: -1px;
    padding-bottom: 2px;
    background: #fff;
    border-right: 1px solid #999;
    border-bottom: 2px solid #217346;
    color: #217346;
    font-weight: 700;
    font-size: 16px;
}
.add-sheet {
    margin-left: 31px;
}
.sheet-bar .dots {
    margin: 7px 15px 0 auto;
}
.hscroll {
    width: 729px;
    margin: 4px 24px 0 0;
    display: flex;
    height: 19px;
}
.hscroll .thumb {
    width: 653px;
    height: 19px;
}

/* status bar */
.status {
    flex: none;
    display: flex;
    justify-content: flex-end;
    align-items: center;
    height: 26px;
    background: #f3f3f3;
    padding-right: 11px;
}
.view {
    width: 50px;
    height: 26px;
}
.view.on { background: #c6c6c6; }
.zoom { width: 23px; }
.zoom-range {
    appearance: none;
    width: 125px;
    height: 14px;
    background: linear-gradient(#ababab, #ababab) no-repeat center / 100% 1px;
}
.zoom-range::-webkit-slider-thumb {
    appearance: none;
    width: 6px;
    height: 14px;
    background: #666;
}
.percent {
    width: 40px;
    text-align: right;
    font-size: 12px;
    color: #555;
}

/* windows taskbar */
.taskbar {
    flex: none;
    display: flex;
    height: 50px;
    color: #fff;
    background: linear-gradient(90deg, #242321 0, #242322 37%, #48212c 41%, #48212c 60%, #222 64%, #202020 75%, #40342c 82%, #40342c 100%);
}
.start { width: 60px; }
.search {
    display: flex;
    align-items: center;
    width: 429px;
    gap: 14px;
    padding-left: 15px;
    background: #f2f2f2;
    border: 1px solid #bbb;
    border-left: 0;
    color: #333;
    font-size: 17px;
}
.search input { flex: 1; }
.search input::placeholder { color: #333; }
.app {
    width: 62px;
}
.open {
    background: linear-gradient(#f8b5c4, #f8b5c4) no-repeat center bottom / 51px 3px;
}
.current {
    background: linear-gradient(#f8b5c4, #f8b5c4) no-repeat center bottom / 100% 3px, #7f626b;
}
.app text {
    font-size: 13px;
    font-weight: 700;
    fill: #fff;
    text-anchor: middle;
}
.tray {
    display: flex;
    align-items: center;
    margin-left: auto;
    gap: 20px;
    padding-right: 5px;
}
.battery {
    position: relative;
    width: 62px;
    height: 25px;
    line-height: 19px;
    border: 3px solid #fff;
    background: #169b48;
    text-align: center;
    font-size: 16px;
}
.battery::after {
    content: "";
    position: absolute;
    right: -6px;
    top: 3px;
    width: 3px;
    height: 13px;
    background: #fff;
}
.plug {
    margin-left: -10px;
    margin-right: -4px;
}
.pen { margin-left: 4px; }
.clock {
    display: flex;
    flex-direction: column;
    align-items: center;
    width: 76px;
    line-height: 23px;
    margin-left: -2px;
}
.notice {
    position: relative;
    width: 46px;
    height: 50px;
    padding-top: 15px;
    border-right: 1px solid #776e67;
}
.notice b {
    position: absolute;
    left: 10px;
    top: 24px;
    width: 21px;
    height: 21px;
    line-height: 18px;
    border: 1px solid #999;
    border-radius: 50%;
    background: #333;
    text-align: center;
    font-size: 14px;
}
```
